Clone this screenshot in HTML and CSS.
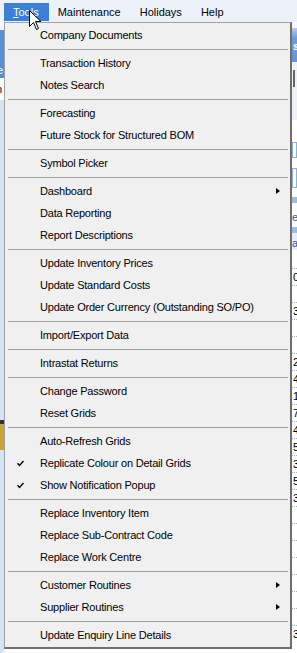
FILE: index.html
```html
<!DOCTYPE html>
<html lang="en">
<head>
    <meta charset="UTF-8">
    <meta name="viewport" content="width=device-width, initial-scale=1.0">
    <title>Tools menu</title>
    <link rel="stylesheet" href="styles.css">
</head>
<body>
    <div class="app">
        <nav class="menubar">
            <div class="menubar-item is-open"><u>T</u>ools</div>
            <div class="menubar-item">Maintenance</div>
            <div class="menubar-item">Holidays</div>
            <div class="menubar-item">Help</div>
        </nav>

        <div class="workspace">
            <div class="side-left">
                <div class="sl-white"></div>
                <div class="sl-blue">e</div>
                <div class="sl-text">n</div>
                <div class="sl-pale"></div>
                <div class="sl-mark"></div>
                <div class="sl-pale sl-fill"></div>
            </div>
            <div class="main"></div>
            <div class="side-right">
                <div class="sr-top"></div>
                <div class="sr-header">s</div>
                <div class="sr-light"><span class="sr-tick"></span></div>
                <div class="sr-boxes"><span class="sr-box"></span><span class="sr-box sr-box-tall"></span></div>
                <div class="sr-band"></div>
                <div class="sr-label">e</div>
                <div class="sr-band"></div>
                <div class="sr-label sr-label-alt">a</div>
                <div class="sr-gap"></div>
                <div class="sr-grid">
                    <div class="sr-row">0</div>
                    <div class="sr-row"></div>
                    <div class="sr-row">3</div>
                    <div class="sr-row"></div>
                    <div class="sr-row"></div>
                    <div class="sr-row">2</div>
                    <div class="sr-row">4</div>
                    <div class="sr-row">1</div>
                    <div class="sr-row">7</div>
                    <div class="sr-row">4</div>
                    <div class="sr-row">5</div>
                    <div class="sr-row">3</div>
                    <div class="sr-row">5</div>
                    <div class="sr-row">3</div>
                    <div class="sr-row"></div>
                    <div class="sr-row"></div>
                    <div class="sr-row"></div>
                    <div class="sr-row"></div>
                    <div class="sr-row"></div>
                    <div class="sr-row"></div>
                    <div class="sr-row"></div>
                    <div class="sr-row">3</div>
                </div>
            </div>
        </div>
    </div>

    <div class="dropdown">
        <div class="menu-item"><span class="menu-check"></span>Company Documents</div>
        <div class="menu-sep"></div>
        <div class="menu-item"><span class="menu-check"></span>Transaction History</div>
        <div class="menu-item"><span class="menu-check"></span>Notes Search</div>
        <div class="menu-sep"></div>
        <div class="menu-item"><span class="menu-check"></span>Forecasting</div>
        <div class="menu-item"><span class="menu-check"></span>Future Stock for Structured BOM</div>
        <div class="menu-sep"></div>
        <div class="menu-item"><span class="menu-check"></span>Symbol Picker</div>
        <div class="menu-sep"></div>
        <div class="menu-item"><span class="menu-check"></span>Dashboard<span class="menu-arrow"></span></div>
        <div class="menu-item"><span class="menu-check"></span>Data Reporting</div>
        <div class="menu-item"><span class="menu-check"></span>Report Descriptions</div>
        <div class="menu-sep"></div>
        <div class="menu-item"><span class="menu-check"></span>Update Inventory Prices</div>
        <div class="menu-item"><span class="menu-check"></span>Update Standard Costs</div>
        <div class="menu-item"><span class="menu-check"></span>Update Order Currency (Outstanding SO/PO)</div>
        <div class="menu-sep"></div>
        <div class="menu-item"><span class="menu-check"></span>Import/Export Data</div>
        <div class="menu-sep"></div>
        <div class="menu-item"><span class="menu-check"></span>Intrastat Returns</div>
        <div class="menu-sep"></div>
        <div class="menu-item"><span class="menu-check"></span>Change Password</div>
        <div class="menu-item"><span class="menu-check"></span>Reset Grids</div>
        <div class="menu-sep"></div>
        <div class="menu-item"><span class="menu-check"></span>Auto-Refresh Grids</div>
        <div class="menu-item">
            <span class="menu-check"><svg width="7" height="7" viewBox="0 0 7 7"><polyline points="0.5,3.2 2.5,5.4 6.5,1" fill="none" stroke="#000" stroke-width="1.4"/></svg></span>Replicate Colour on Detail Grids
        </div>
        <div class="menu-item">
            <span class="menu-check"><svg width="7" height="7" viewBox="0 0 7 7"><polyline points="0.5,3.2 2.5,5.4 6.5,1" fill="none" stroke="#000" stroke-width="1.4"/></svg></span>Show Notification Popup
        </div>
        <div class="menu-sep"></div>
        <div class="menu-item"><span class="menu-check"></span>Replace Inventory Item</div>
        <div class="menu-item"><span class="menu-check"></span>Replace Sub-Contract Code</div>
        <div class="menu-item"><span class="menu-check"></span>Replace Work Centre</div>
        <div class="menu-sep"></div>
        <div class="menu-item"><span class="menu-check"></span>Customer Routines<span class="menu-arrow"></span></div>
        <div class="menu-item"><span class="menu-check"></span>Supplier Routines<span class="menu-arrow"></span></div>
        <div class="menu-sep"></div>
        <div class="menu-item"><span class="menu-check"></span>Update Enquiry Line Details</div>
    </div>

    <svg class="cursor" width="13" height="21" viewBox="0 0 13 21">
        <polygon points="0.5,0.5 0.5,16.5 4.5,12.5 7.5,19.5 9.5,18.5 6.5,11.5 12,11.5" fill="#fff" stroke="#000" stroke-width="1" stroke-linejoin="miter"/>
    </svg>
</body>
</html>
```

FILE: styles.css
```css
body {
    margin: 0;
    width: 297px;
    height: 653px;
    overflow: hidden;
    position: relative;
    font-family: "Liberation Sans", Arial, sans-serif;
    font-size: 11px;
    color: #000;
    background: #fff;
}
.menubar {
    display: flex;
    height: 22px;
    padding: 3px 0 0 4px;
    box-sizing: border-box;
    background: #edf2fa;
}
.menubar-item {
    height: 18px;
    line-height: 18px;
    padding: 0 10px 0 9px;
    white-space: nowrap;
}
.menubar-item.is-open {
    background: #3a80d6;
    color: #fff;
}
.workspace {
    display: flex;
    height: 631px;
}
.main {
    flex: 1;
    background: #fff;
}

/* bits of the window behind the menu */
.side-left {
    width: 4px;
    display: flex;
    flex-direction: column;
    overflow: hidden;
}
.sl-white {
    height: 8px;
    background: #f4f6fa;
}
.sl-blue {
    height: 48px;
    background: #5a8ed2;
    color: #fff;
    line-height: 80px;
    text-indent: -3px;
}
.sl-text {
    height: 22px;
    background: #fff;
    line-height: 22px;
    text-indent: -4px;
}
.sl-pale {
    height: 320px;
    background: #d6e3f4;
}
.sl-mark {
    height: 26px;
    background: #c8a23a;
    border-top: 4px solid #333;
}
.sl-fill {
    flex: 1;
}
.side-right {
    width: 5px;
    display: flex;
    flex-direction: column;
    overflow: hidden;
}
.sr-top {
    height: 6px;
    background: #f6f8fb;
}
.sr-header {
    height: 34px;
    background: linear-gradient(#b7cdec, #6f9bd4 30%, #6a96d0);
    color: #fff;
    font-weight: bold;
    line-height: 36px;
    padding-left: 1px;
}
.sr-light {
    height: 58px;
    background: #eef1f5;
    padding-top: 8px;
    box-sizing: border-box;
}
.sr-tick {
    display: block;
    width: 2px;
    height: 17px;
    background: #666;
    margin-left: 1px;
}
.sr-boxes {
    height: 77px;
    background: #fff;
    display: flex;
    flex-direction: column;
    gap: 10px;
    padding-top: 22px;
    box-sizing: border-box;
}
.sr-box {
    display: block;
    height: 14px;
    border: 1px solid #8fb0db;
}
.sr-box-tall {
    height: 18px;
}
.sr-band {
    height: 6px;
    background: #9dbbe3;
}
.sr-label {
    height: 24px;
    line-height: 28px;
    color: #2456a0;
    background: #fff;
}
.sr-label-alt {
    height: 17px;
    line-height: 20px;
    background: #e6eef9;
}
.sr-gap {
    height: 18px;
}
.sr-grid {
    display: flex;
    flex-direction: column;
}
.sr-row {
    height: 17px;
    line-height: 17px;
    border-top: 1px dotted #a9b4c4;
    box-sizing: border-box;
    padding-left: 1px;
}

.dropdown {
    position: absolute;
    left: 4px;
    top: 22px;
    width: 285px;
    padding: 1px 0;
    background: #f0f0f0;
    border: 1px solid #a0a0a0;
    border-right: 2px solid #6f6f6f;
    border-bottom: 2px solid #6f6f6f;
}
.menu-item {
    display: flex;
    align-items: center;
    height: 22px;
    padding-right: 10px;
    letter-spacing: -0.2px;
    white-space: nowrap;
}
.menu-check {
    width: 35px;
    flex: none;
    display: flex;
    align-items: center;
    padding-left: 12px;
    box-sizing: border-box;
}
.menu-arrow {
    margin-left: auto;
    width: 0;
    height: 0;
    border-left: 4px solid #000;
    border-top: 3px solid transparent;
    border-bottom: 3px solid transparent;
}
.menu-sep {
    height: 1px;
    margin: 3px 2px 2px 3px;
    background: #a0a0a0;
}
.cursor {
    position: absolute;
    left: 29px;
    top: 10px;
}
```
